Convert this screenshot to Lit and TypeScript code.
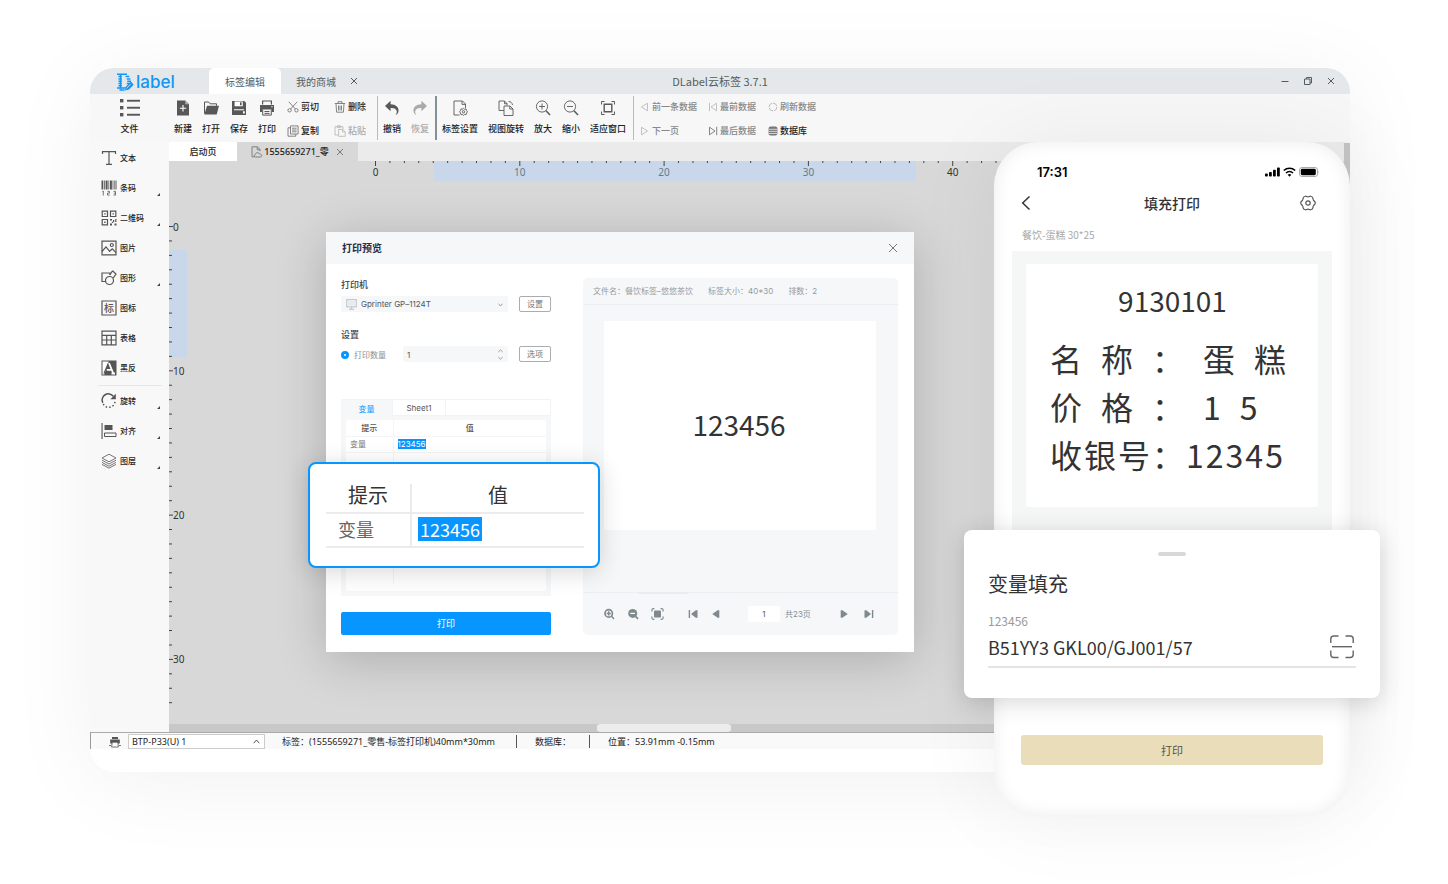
import { LitElement, html, svg, css, nothing } from "lit";
import type { SVGTemplateResult } from "lit";
import { customElement, property } from "lit/decorators.js";
import { classMap } from "lit/directives/class-map.js";

type Glyph = { w: number; h: number; body: SVGTemplateResult };

const g = (w: number, h: number, body: SVGTemplateResult): Glyph => ({ w, h, body });

/* Glyphs are drawn in currentColor; strokes are declared where needed. */
const GLYPHS: Record<string, Glyph> = {
  logo: g(17, 18, svg`
    <g fill="none" stroke="currentColor" stroke-width="1.5">
      <path d="M0 1.3h10M1.500 3.6h3.300M8.500 3.600h3.800M1.500 5.900h3.300M9.800 5.900h3.600M1.500 8.200h3.300M10.300 8.200h3.600M1.500 10.500h3.300M9.800 10.500h2.800M1.500 12.800h3.300M0 15.100h9M2.500 17h5"/>
      <path d="M3.600 1v14.500"/>
    </g>
    <path fill="currentColor" d="M13.800 8.200l2.800 3.600-4.600 4.800-4 .9.700-3.600z"/>
    <path stroke="#e4e8eb" stroke-width=".8" d="M9.500 15.500l4-4.300"/>`),
  menu: g(20, 18, svg`
    <g fill="currentColor"><rect width="3.400" height="3.400" y="0"/><rect width="3.400" height="3.400" y="7"/><rect width="3.400" height="3.400" y="14"/>
    <rect x="7" y=".8" width="13" height="1.900"/><rect x="7" y="7.800" width="13" height="1.900"/><rect x="7" y="14.800" width="13" height="1.900"/></g>`),
  create: g(16, 18, svg`
    <path fill="currentColor" d="M2 1.500h8.200L14 5.300V16.500H2z"/><path stroke="#fff" stroke-width="1.100" d="M8 6v6.400M4.800 9.200h6.400"/><path fill="#aaa" d="M10.200 1.500V5.300H14z"/>`),
  open: g(16, 18, svg`
    <path fill="none" stroke="currentColor" d="M1.500 14.500V3h4.200l1.400 1.800h6.400v2"/><path fill="currentColor" d="M4 6.800h12l-2.300 8.700H1.300z"/>`),
  save: g(16, 18, svg`
    <path fill="currentColor" d="M1 2h12.200L15 3.800V16H1z"/><path fill="#fff" d="M3.600 2.500h8.200v4.800H3.600zM3 10.300h10v1H3zM12 12.300h1.800v2.200H12z"/><path fill="currentColor" d="M9 3.200h1.600v3H9z"/>`),
  print: g(16, 18, svg`
    <path fill="none" stroke="currentColor" stroke-width="1.200" d="M3.600 5.500V2h8.800v3.500"/><path fill="currentColor" d="M1 6h14v7h-2.200v-2.500H3.200V13H1z"/><path fill="none" stroke="currentColor" d="M3.700 10.500v5.600h8.600v-5.600M5.500 12.500h5M5.500 14.400h5"/><path fill="#fff" d="M12.300 7.200h1.300v1h-1.300z"/>`),
  cut: g(12, 12, svg`
    <g fill="none" stroke="currentColor" stroke-width=".9"><circle cx="2.600" cy="9.300" r="1.700"/><circle cx="9.400" cy="9.300" r="1.700"/><path d="M3.600 8L10.200.8M8.400 8L1.800.8"/></g>`),
  copy: g(12, 12, svg`
    <g fill="none" stroke="currentColor" stroke-width=".9"><path d="M3.500.900h7.600v8.100H3.500zM3.500 2.800H1v8.400h7.800V9M5 3.200h4.600M5 5h4.600M5 6.800h4.600"/></g>`),
  remove: g(12, 12, svg`
    <g fill="none" stroke="currentColor" stroke-width=".9"><path d="M.8 2.500h10.400M4 2.300V.7h4v1.600M2 2.700l.6 8.500h6.800l.6-8.500M4.500 4.500v5M6 4.500v5M7.500 4.500v5"/></g>`),
  paste: g(12, 12, svg`
    <g fill="none" stroke="currentColor" stroke-width=".9"><path d="M4 10H1V1.700h8V4M3.300.800h3.400v1.800H3.300zM4.600 4.500h4.200l2.400 2.200v4.600H4.600zM8.500 4.700V7h2.500"/></g>`),
  undo: g(16, 18, svg`
    <path fill="currentColor" d="M6.600 1.800v3.400c5.200.1 8.200 3 7.900 6.700-.1 1.900-1.200 3.300-3 4.300 1-1.400 1.500-2.500 1.300-3.900-.3-2.200-2.500-3.400-6.200-3.300v3.200L1 7z"/>`),
  redo: g(16, 18, svg`
    <path fill="currentColor" d="M9.400 1.800v3.400C4.200 5.300 1.200 8.200 1.500 11.900c.1 1.900 1.200 3.300 3 4.300-1-1.400-1.500-2.500-1.300-3.900.3-2.200 2.500-3.400 6.200-3.300v3.200L15 7z"/>`),
  setup: g(16, 18, svg`
    <g fill="none" stroke="currentColor" stroke-width=".9"><path d="M7.500 16H2V2h8.500L13.500 5v4M10 2.200v3.200h3.300"/><circle cx="11.500" cy="12.800" r="1.200"/><path d="M11.500 9.300l1 .9 1.500-.3.500 1.500 1 1.400-1 1.200-.4 1.600-1.600-.1-1 .9-1-.9-1.600.1-.4-1.600-1-1.200 1-1.400.5-1.500 1.500.3z"/></g>`),
  rotateView: g(18, 18, svg`
    <g fill="none" stroke="currentColor" stroke-width=".9"><path d="M7 11.500H2V2h5.500L10 4.500v2M7.500 2.200v2.500H10M7 7h6l3 3v6.500H7zM12.800 7.200V10H16M11.500 2.500c2.200 0 3.700 1.300 4 3.500"/></g>`),
  zoomIn: g(16, 18, svg`
    <g fill="none" stroke="currentColor" stroke-width=".9"><circle cx="7" cy="7.500" r="5.600"/><path d="M4 7.500h6M7 4.500v6"/><path stroke-width="1.500" d="M11 11.700l4 4.300"/></g>`),
  zoomOut: g(16, 18, svg`
    <g fill="none" stroke="currentColor" stroke-width=".9"><circle cx="7" cy="7.500" r="5.600"/><path d="M4 7.500h6"/><path stroke-width="1.500" d="M11 11.700l4 4.300"/></g>`),
  fit: g(16, 18, svg`
    <g fill="none" stroke="currentColor"><path d="M1.500 5.500v-3h3M11.500 2.500h3v3M14.500 12.500v3h-3M4.500 15.500h-3v-3"/><path stroke-width="1.400" d="M4.200 5.300h7.600v7.400H4.200z"/></g>`),
  prev: g(10, 10, svg`<path fill="none" stroke="currentColor" stroke-width=".9" d="M7.500 1.200v7.600L1.500 5z"/>`),
  next: g(10, 10, svg`<path fill="none" stroke="currentColor" stroke-width=".9" d="M1.500 1.200v7.600L7.500 5z"/>`),
  first: g(10, 10, svg`<path fill="none" stroke="currentColor" stroke-width=".9" d="M8.500 1.200v7.600L3 5zM1.500.8v8.400"/>`),
  last: g(10, 10, svg`<path fill="none" stroke="currentColor" stroke-width=".9" d="M1.500 1.200v7.600L7 5zM8.700.8v8.400"/>`),
  refresh: g(10, 10, svg`<circle cx="5" cy="5" r="3.900" fill="none" stroke="currentColor" stroke-dasharray="5 1"/>`),
  database: g(10, 10, svg`<rect x=".6" y=".6" width="8.800" height="8.800" rx="2" fill="currentColor"/><path stroke="#eee" stroke-width=".8" d="M1 3.300h8M1 5.400h8M1 7.500h8"/>`),
  text: g(16, 16, svg`<path fill="none" stroke="currentColor" stroke-width="1.200" d="M1.500 4V1.600h13V4M8 1.600v12.800M5 14.400h6"/>`),
  barcode: g(16, 16, svg`
    <path fill="currentColor" d="M.5.500h1.800v9H.5zM3 .5h.8v9H3zM4.600.500h2v9h-2zM7.400.500h.8v9h-.8zM9 .5h1.900v9H9zM11.600.500h.8v9h-.8zM13.200.500h.6v9h-.6zM14.500.500h1v9h-1z"/>
    <path fill="none" stroke="currentColor" stroke-width=".8" d="M2.300 11v4.500M1.400 11.700l.9-.7M6.500 11.400h2v1.700h-2v2h2.200M12.500 11.400h2v3.700h-2M12.800 13.200h1.700"/>`),
  qrcode: g(16, 16, svg`
    <g fill="none" stroke="currentColor" stroke-width="1.200"><path d="M1.200 1.200h5.300v5.300H1.200zM9.500 1.200h5.300v5.300H9.500zM1.200 9.500h5.300v5.300H1.200z"/></g>
    <path fill="currentColor" d="M3.200 3.200h1.400v1.400H3.200zM11.500 3.200h1.400v1.400h-1.400zM3.200 11.500h1.400v1.400H3.200zM9 9h2v1.500H9zM12 10h1.200v2H12zM14.200 9h1.200v3h-1.200zM9 13.500h2v2H9zM10.800 11.700h1.400v1.400h-1.400zM13.500 13.500h2v2h-2z"/>`),
  picture: g(16, 16, svg`
    <g fill="none" stroke="currentColor" stroke-width="1.200"><path d="M1 1.200h14v13.600H1z"/><circle cx="10.800" cy="5" r="1.500"/><path d="M1 11.500l4-4.600 3.600 4.400 2.700-2.500 3.700 3.800"/></g>`),
  shape: g(16, 16, svg`
    <g fill="none" stroke="currentColor" stroke-width="1.200"><path d="M5 11.500H1V3h8v2"/><circle cx="8.500" cy="10.500" r="4"/><path d="M11.500.800l3.500 3.200-2.800 4M11.500.800L8.700 5"/></g>`),
  frame: g(16, 16, svg`<path fill="none" stroke="currentColor" stroke-width="1.200" d="M1 1h14v14H1z"/>`),
  table: g(16, 16, svg`
    <g fill="none" stroke="currentColor" stroke-width="1.200"><path d="M1 1.200h14v13.600H1zM1 5.300h14M1 10h14M5.700 5.300v9.500M10.300 5.300v9.500"/></g>`),
  invert: g(16, 16, svg`
    <path fill="currentColor" d="M.5.500h15v15H.5z"/><path fill="#fff" d="M1.500 1.500h6.200L3.300 14.500H1.500z"/>
    <path fill="none" stroke="currentColor" stroke-width="1.300" d="M3 13.500L7.500 3"/><path fill="none" stroke="#fff" stroke-width="1.800" d="M8 3l4.300 10.500M5.800 9.800h5M10.500 13.500h3.500"/>`),
  rotate: g(16, 16, svg`
    <path fill="none" stroke="currentColor" stroke-width="1.500" d="M1.800 9.800A6.200 6.200 0 0 1 12.300 3.300"/><path fill="none" stroke="currentColor" stroke-width="1.500" stroke-dasharray="1.500 2" d="M2.300 11A6.200 6.200 0 0 0 14 8.500"/><path fill="currentColor" d="M14.800.800v5.400H9.400z"/>`),
  align: g(16, 16, svg`<path fill="currentColor" d="M.5 0h1.100v16H.5zM3.500 2h8v5h-8z"/><path fill="none" stroke="currentColor" d="M3.500 10h11.500v3.500H3.500z"/>`),
  layers: g(16, 16, svg`
    <g fill="none" stroke="currentColor" stroke-width=".8"><path d="M8 1.200l7 3.800-7 3.800L1 5z"/><path d="M1 7.200l7 3.800 7-3.800M1 9.400l7 3.800 7-3.800M1 11.400l7 3.800 7-3.800"/></g>`),
  corner: g(3, 3, svg`<path fill="currentColor" d="M3 0v3H0z"/>`),
  close: g(8, 8, svg`<path fill="none" stroke="currentColor" d="M1 1l6 6M7 1L1 7"/>`),
  closeThin: g(10, 10, svg`<path fill="none" stroke="currentColor" stroke-width=".9" d="M1 1l8 8M9 1L1 9"/>`),
  minimise: g(8, 8, svg`<path stroke="currentColor" d="M.5 4.500h7"/>`),
  restore: g(8, 8, svg`<path fill="none" stroke="currentColor" d="M.5 2h5.500v5.500H.5zM2.500 2V.5h5V6H6"/>`),
  sheetDoc: g(12, 12, svg`<g fill="none" stroke="currentColor" stroke-width=".9"><path d="M3.500 10.800H1V.8h5.500L9 3.500v1.700M6.200 1v2.800H9M4.400 11c-1.500 0-1.700-2-.2-2.300.2-2.300 3.600-2.800 4.300-.7 1.500 0 2.200.700 2.200 1.600 0 .9-.7 1.400-1.500 1.400z"/></g>`),
  printer: g(12, 12, svg`<path fill="currentColor" d="M3 1h6v2H3zM1.200 3.500h9.600v4H1.200z"/><path fill="#fafafa" stroke="currentColor" stroke-width=".8" d="M3.200 6.200h5.600l.6 4.800H2.600z"/><path stroke="currentColor" stroke-width=".8" d="M0 9.500h2M10 9.500h2"/>`),
  caretUp: g(7, 5, svg`<path fill="none" stroke="currentColor" d="M.7 4.200L3.500 1l2.800 3.200"/>`),
  caretDown: g(5, 4, svg`<path fill="none" stroke="currentColor" stroke-width=".8" d="M.5.700L2.500 3 4.500.700"/>`),
  spin: g(5, 11, svg`<path fill="none" stroke="currentColor" stroke-width=".8" d="M.3 3L2.500.900 4.700 3M.3 8l2.200 2.100L4.700 8"/>`),
  monitor: g(11, 11, svg`<path fill="none" stroke="currentColor" stroke-width="1.200" d="M.7.700h9.600v7.100H.7zM5.500 8v2M3 10.400h5"/><path fill="currentColor" opacity=".25" d="M2 2h7v4.500H2z"/>`),
  magPlus: g(13, 12, svg`<circle cx="5.700" cy="5.400" r="3.700" fill="none" stroke="currentColor" stroke-width="1.700"/><path stroke="currentColor" stroke-width="1.500" d="M8.600 8.300l2.400 2.600M5.700 3.300v4.200M3.600 5.400h4.200"/>`),
  magMinus: g(13, 12, svg`<circle cx="5.700" cy="5.400" r="4.500" fill="currentColor"/><path stroke="currentColor" stroke-width="1.700" d="M8.600 8.300l2.400 2.600"/><path stroke="#fff" stroke-width="1.200" d="M3.300 5.400h4.800"/>`),
  fitSolid: g(13, 12, svg`<rect x="3" y="2.500" width="7" height="7" rx="1" fill="currentColor"/><path fill="none" stroke="currentColor" stroke-width="1.200" d="M.9 3.500V2.200Q.9.700 2.400.700h1M9.600.700h1q1.500 0 1.500 1.500v1.300M12.100 8.500v1.300q0 1.500-1.500 1.500h-1M3.400 11.300h-1Q.9 11.300.9 9.800V8.500"/>`),
  firstSolid: g(12, 10, svg`<path fill="currentColor" d="M10.500 1.200v7.600H8.800L4 5l4.800-3.800zM1.700 1h1.400v8H1.700z"/>`),
  prevSolid: g(12, 10, svg`<path fill="currentColor" d="M9.300 1.200v7.600H7.600L2.300 5l5.300-3.800z"/>`),
  nextSolid: g(12, 10, svg`<path fill="currentColor" d="M2.700 1.200v7.600h1.700L9.700 5 4.400 1.200z"/>`),
  lastSolid: g(12, 10, svg`<path fill="currentColor" d="M1.500 1.200v7.600h1.700L8 5 3.200 1.200zM8.900 1h1.400v8H8.900z"/>`),
  signal: g(15, 10, svg`<g fill="currentColor"><rect y="6.500" width="2.800" height="3" rx=".8"/><rect x="4" y="5" width="2.800" height="4.500" rx=".8"/><rect x="8" y="2.800" width="2.800" height="6.700" rx=".8"/><rect x="12" y=".5" width="2.800" height="9" rx=".8"/></g>`),
  wifi: g(13, 10, svg`<g fill="none" stroke="currentColor" stroke-width="1.600"><path d="M.8 3.500a8.400 8.400 0 0 1 11.400 0M3 6a5.200 5.200 0 0 1 7 0"/></g><path fill="currentColor" d="M4.700 7.700a2.800 2.800 0 0 1 3.600 0L6.500 9.700z"/>`),
  battery: g(21, 10, svg`<rect x=".5" y=".5" width="18" height="9" rx="2.500" fill="none" stroke="#aaa"/><rect x="1.800" y="1.800" width="15" height="6.400" rx="1.400" fill="currentColor"/><path fill="#aaa" d="M19.300 3.500q1.300 1.500 0 3z"/>`),
  back: g(10, 16, svg`<path fill="none" stroke="currentColor" stroke-width="1.500" d="M8.500 1.500L1.700 8l6.800 6.500"/>`),
  gear: g(16, 16, svg`<g fill="none" stroke="currentColor" stroke-width="1.200" stroke-linejoin="round"><circle cx="8" cy="8" r="2.200"/><path d="M5.300 1.200c.9-.3 1.500.7 2.700.7s1.800-1 2.700-.7c1 .3 2 .9 2.100 1.800.1 1 .200 1.700.8 2.500.7.800 1.600 1 1.700 2.500-.1 1.500-1 1.700-1.700 2.500-.6.8-.7 1.500-.8 2.500-.1.900-1.100 1.500-2.100 1.800-.9.300-1.500-.7-2.700-.7s-1.800 1-2.700.7c-1-.3-2-.9-2.100-1.800-.1-1-.2-1.700-.8-2.500C1.700 9.700.8 9.500.7 8c.1-1.500 1-1.700 1.700-2.500.6-.8.7-1.500.8-2.500.1-.9 1.100-1.500 2.100-1.800z"/></g>`),
  scan: g(24, 24, svg`<g fill="none" stroke="currentColor" stroke-width="1.400"><path d="M.8 8V4Q.8 1 3.800 1h4.700M15.500 1h4.700q3 0 3 3v4M23.200 15.500v4q0 3-3 3h-4.700M8.500 22.500H3.800q-3 0-3-3v-4"/><path d="M2 11.700h20"/></g>`),
};

const icon = (name: string) => {
  const { w, h, body } = GLYPHS[name];
  return html`<svg width=${w} height=${h} viewBox="0 0 ${w} ${h}" aria-hidden="true">${body}</svg>`;
};

const shared = css`
  * { box-sizing: border-box; }
  svg { display: block; flex: none; }
  button {
    margin: 0; padding: 0; border: 0; background: none; color: inherit;
    font: inherit; white-space: nowrap; cursor: pointer;
  }
  input, select {
    margin: 0; padding: 0; border: 0; background: none; color: inherit;
    font: inherit; border-radius: 0; outline: none; appearance: none; min-width: 0;
  }
  input[type="number"] { -moz-appearance: textfield; }
  input::-webkit-inner-spin-button { appearance: none; margin: 0; }
`;

@customElement("title-bar")
export class TitleBar extends LitElement {
  static styles = [shared, css`
    :host { display: grid; grid-template-columns: 1fr auto 1fr; align-items: center; height: 26px; background: #e4e8eb; color: #555c61; font-size: 11px; }
    .left { display: flex; align-items: center; height: 26px; }
    .logo { display: flex; align-items: center; gap: 2px; width: 119px; padding: 2px 0 0 27px; color: #1296f5; }
    .name { font: 500 17px/24px Inter, sans-serif; }
    .tab { display: flex; align-items: center; justify-content: center; gap: 14px; height: 26px; font-size: 10px; }
    .on { width: 72px; background: #fff; border-radius: 5px 5px 0 0; }
    .other { padding-left: 15px; }
    .title { font-family: "Noto Sans CJK SC", sans-serif; line-height: 16px; }
    .controls { display: flex; justify-content: flex-end; gap: 15px; padding-right: 15px; }
  `];
  render() {
    return html`
      <div class="left">
        <div class="logo">${icon("logo")}<span class="name">label</span></div>
        <button class="tab on">标签编辑</button>
        <button class="tab other">我的商城 ${icon("close")}</button>
      </div>
      <div class="title">DLabel云标签 3.7.1</div>
      <div class="controls">
        <button aria-label="最小化">${icon("minimise")}</button>
        <button aria-label="还原">${icon("restore")}</button>
        <button aria-label="关闭">${icon("close")}</button>
      </div>`;
  }
}

@customElement("tool-bar")
export class ToolBar extends LitElement {
  static styles = [shared, css`
    :host { display: flex; height: 48px; background: #f7f7f7; color: #222; font-size: 9px; line-height: 12px; font-weight: 500; }
    .tool { display: flex; flex-direction: column; align-items: center; gap: 6px; width: 28px; height: 48px; padding-top: 5px; }
    .wide { width: 46px; }
    .file { width: 79px; }
    .tool svg { color: #585858; }
    .off, .tool.off svg { color: #aaa; }
    .small { display: flex; align-items: center; gap: 2px; height: 24px; padding-top: 1px; }
    .small svg { color: #777; }
    .small.off svg { color: #bbb; }
    .dim { color: #888; }
    .edit { display: grid; grid-template-columns: 47px 43px; padding-left: 6px; }
    .data { display: grid; grid-template-columns: 68px 60px auto; padding-left: 6px; }
    .rule { width: 1px; height: 44px; margin-top: 2px; background: #bbb; }
    .heavy { width: 2px; background: #849298; margin-left: 1px; }
    .gap { margin-left: 2px; }
  `];
  private tool(name: string, label: string, extra = "") {
    return html`<button class="tool ${extra}">${icon(name)}<span>${label}</span></button>`;
  }
  private small(name: string, label: string, extra = "") {
    return html`<button class="small ${extra}">${icon(name)}<span>${label}</span></button>`;
  }
  render() {
    return html`
      ${this.tool("menu", "文件", "file")}
      ${this.tool("create", "新建")}${this.tool("open", "打开")}${this.tool("save", "保存")}${this.tool("print", "打印")}
      <div class="edit">
        ${this.small("cut", "剪切")}${this.small("remove", "删除")}
        ${this.small("copy", "复制")}${this.small("paste", "粘贴", "off")}
      </div>
      <div class="rule"></div>
      ${this.tool("undo", "撤销")}${this.tool("redo", "恢复", "off")}
      <div class="rule heavy"></div>
      ${this.tool("setup", "标签设置", "wide")}${this.tool("rotateView", "视图旋转", "wide")}
      ${this.tool("zoomIn", "放大")}${this.tool("zoomOut", "缩小")}${this.tool("fit", "适应窗口", "wide")}
      <div class="rule gap"></div>
      <div class="data">
        ${this.small("prev", "前一条数据", "off dim")}${this.small("first", "最前数据", "off dim")}${this.small("refresh", "刷新数据", "off dim")}
        ${this.small("next", "下一页", "off dim")}${this.small("last", "最后数据", "dim")}${this.small("database", "数据库")}
      </div>`;
  }
}

@customElement("side-tools")
export class SideTools extends LitElement {
  static styles = [shared, css`
    :host { display: block; padding-top: 1px; background: #f8f8f8; color: #222; font-size: 8px; line-height: 12px; font-weight: 500; }
    .item { display: flex; align-items: center; gap: 3px; width: 100%; height: 30px; padding: 0 9px 0 11px; }
    .face { display: grid; place-items: center; color: #555; }
    .face > * { grid-area: 1 / 1; }
    .glyph { font-size: 10px; line-height: 16px; }
    .more { margin: 0 0 7px auto; align-self: flex-end; color: #444; }
    .split { height: 1px; margin: 2px 7px 0 8px; background: #e6e6e6; }
  `];
  private item(name: string, label: string, more = false) {
    return html`<button class="item">
      <span class="face">${icon(name)}${name === "frame" ? html`<span class="glyph">标</span>` : nothing}</span>
      <span>${label}</span>
      ${more ? html`<span class="more">${icon("corner")}</span>` : nothing}
    </button>`;
  }
  render() {
    return html`
      ${this.item("text", "文本")}${this.item("barcode", "条码", true)}${this.item("qrcode", "二维码", true)}
      ${this.item("picture", "图片")}${this.item("shape", "图形", true)}${this.item("frame", "图标")}
      ${this.item("table", "表格")}${this.item("invert", "黑反")}
      <div class="split"></div>
      ${this.item("rotate", "旋转", true)}${this.item("align", "对齐", true)}${this.item("layers", "图层", true)}`;
  }
}

/* Millimetre ruler: one tick per unit, a number on every tenth. */
@customElement("mm-ruler")
export class MmRuler extends LitElement {
  @property({ type: Boolean }) vertical = false;
  @property({ type: Number }) start = 0;
  @property({ type: Number }) count = 0;
  @property({ type: Number }) from = 0;
  @property({ type: Number }) to = 0;
  static styles = [shared, css`
    :host { display: block; overflow: hidden; }
    text { font-size: 10px; fill: #333; }
    .soft { fill: #66798b; }
    .band { fill: #c8d8ea; }
    .tick { stroke: #444; }
  `];
  render() {
    const step = 14.43;
    const marks = Array.from({ length: this.count }, (_, n) => ({ n, at: this.start + n * step }));
    const soft = (at: number) => classMap({ soft: at > this.from && at < this.to });
    if (this.vertical) {
      return html`<svg width="24" height="562">
        <rect class="band" x="0" y=${this.from} width="18" height=${this.to - this.from}></rect>
        ${marks.map(({ n, at }) => svg`<path class="tick" d="M0 ${at}h${n % 10 ? 3 : 4}"/>
          ${n % 10 ? nothing : svg`<text class=${soft(at)} x="4" y=${at + 4}>${n}</text>`}`)}
      </svg>`;
    }
    return html`<svg width="100%" height="20">
      <rect class="band" x=${this.from} y="0" width=${this.to - this.from} height="20"></rect>
      ${marks.map(({ n, at }) => svg`<path class="tick" d="M${at} 0v${n % 10 ? 2 : 5}"/>
        ${n % 10 ? nothing : svg`<text class=${soft(at)} text-anchor="middle" x=${at} y="15">${n}</text>`}`)}
    </svg>`;
  }
}

@customElement("print-dialog")
export class PrintDialog extends LitElement {
  static styles = [shared, css`
    :host { display: block; position: relative; width: 588px; background: #fff; color: #50565c; font: 8px/12px Inter, "Noto Sans CJK SC", sans-serif; box-shadow: 0 8px 48px rgba(0, 0, 0, .2); }
    .head { display: flex; align-items: center; justify-content: space-between; height: 32px; padding: 0 16px; background: #f5f7f9; color: #2a2d4a; font-size: 10px; font-weight: 700; }
    .x { color: #666; }
    .body { display: grid; grid-template-columns: 210px 1fr; gap: 32px; padding: 14px 16px 17px 15px; }
    .label { display: block; font-size: 9px; line-height: 14px; font-weight: 500; color: #3c4248; margin-bottom: 4px; }
    .row { display: flex; align-items: center; justify-content: space-between; height: 16px; }
    .row + .label { margin-top: 16px; }
    .box { display: flex; align-items: center; gap: 4px; height: 16px; padding: 1px 5px 0; background: #f5f7f9; border-radius: 2px; }
    .printer { width: 167px; }
    .printer select { flex: 1; height: 15px; line-height: 15px; }
    .printer svg { color: #c3c9cd; }
    .printer .caret svg, .spin svg { color: #888; }
    .amount { width: 105px; padding-left: 4px; }
    .amount input { flex: 1; height: 15px; }
    .choice { display: flex; align-items: center; gap: 5px; width: 51px; height: 16px; padding-top: 1px; color: #8b9196; white-space: nowrap; }
    .choice input { flex: none; width: 8px; height: 8px; border: 3px solid #0796ff; border-radius: 50%; background: #fff; }
    .ghost { width: 32px; height: 16px; border: 1px solid #a9adb0; border-radius: 2px; color: #777; line-height: 14px; }
    .sheet { margin: 37px 0 16px; height: 197px; padding-bottom: 5px; background: #f5f7f9; border-radius: 2px; display: flex; flex-direction: column; }
    .tabs { display: flex; height: 17px; border: 1px solid #f1f3f5; border-left: 0; background: #fff; }
    .tabs button { width: 53px; border-right: 1px solid #f1f3f5; }
    .tabs .on { width: 52px; height: 17px; background: #f5f7f9; color: #0796ff; }
    .grid { flex: 1; margin: 4px 5px 0; background: #fff; border-radius: 2px; }
    table { width: 100%; border-collapse: collapse; }
    th, td { padding: 0; height: 16px; border-bottom: 1px solid #f3f4f6; font-weight: 500; text-align: center; line-height: 12px; }
    td { color: #777; font-weight: 400; text-align: left; padding-left: 4px; }
    th:first-child, td:first-child { width: 47px; border-right: 1px solid #f3f4f6; }
    .rest td { height: 116px; border-bottom: 0; }
    mark { background: #0796ff; color: #fff; }
    .submit { display: block; width: 100%; height: 23px; border-radius: 2px; background: #0796ff; color: #fff; font-size: 9px; }
    .view { background: #f5f7f9; border-radius: 5px; }
    .info { display: flex; gap: 15px; height: 27px; align-items: center; padding-left: 10px; border-bottom: 1px solid #eceef1; color: #969b9f; }
    .stage { padding: 16px 22px 62px 21px; }
    .label-face { display: grid; place-items: center; height: 209px; padding: 0 2px 4px 0; background: #fff; color: #333; font: 28px/40px "Noto Sans CJK SC", sans-serif; }
    .foot { display: flex; align-items: center; height: 43px; padding-left: 20px; border-top: 1px solid #eceef1; color: #7f898e; position: relative; }
    .thumb { position: absolute; top: -1px; left: 55px; width: 50px; height: 2px; background: #e9ebee; }
    .zooms, .nav, .page { display: flex; align-items: center; gap: 11px; }
    .nav { margin-left: 23px; }
    .page { gap: 5px; margin-left: 26px; color: #888e93; }
    .page + .nav { margin-left: 27px; gap: 13px; }
    .page input { width: 32px; height: 16px; background: #fff; border-radius: 2px; text-align: center; color: #555; }
    .callout { position: absolute; left: -18px; top: 230px; width: 292px; height: 106px; padding: 20px 14px 0 16px; border: 2px solid #0796ff; border-radius: 8px; background: #fff; box-shadow: 0 4px 24px rgba(0, 0, 0, .16); font: 20px/24px "Noto Sans CJK SC", sans-serif; }
    .callout th, .callout td { border-color: #ebebed; border-bottom-width: 2px; }
    .callout th { height: 29px; padding-bottom: 6px; color: #333; font-weight: 400; line-height: 22px; }
    .callout td { height: 34px; padding: 0 0 2px 6px; color: #666; font-size: 18px; line-height: 24px; }
    .callout th:first-child, .callout td:first-child { width: 85px; border-right-width: 2px; }
    .callout td:first-child { padding-left: 12px; }
    .callout mark { display: block; width: fit-content; padding: 0 2px; line-height: 24px; }
  `];
  render() {
    return html`
      <div class="head"><span>打印预览</span><button class="x" aria-label="关闭">${icon("closeThin")}</button></div>
      <div class="body">
        <div>
          <label class="label" for="printer">打印机</label>
          <div class="row">
            <div class="box printer">${icon("monitor")}
              <select id="printer"><option>Gprinter GP–1124T</option></select>
              <span class="caret">${icon("caretDown")}</span></div>
            <button class="ghost">设置</button>
          </div>
          <div class="label">设置</div>
          <div class="row">
            <label class="choice"><input type="radio" name="mode" checked />打印数量</label>
            <div class="box amount"><input type="number" value="1" aria-label="打印数量" /><span class="spin">${icon("spin")}</span></div>
            <button class="ghost">选项</button>
          </div>
          <div class="sheet">
            <div class="tabs"><button class="on">变量</button><button>Sheet1</button></div>
            <div class="grid">
              <table>
                <thead><tr><th>提示</th><th>值</th></tr></thead>
                <tbody>
                  <tr><td>变量</td><td><mark>123456</mark></td></tr>
                  <tr><td></td><td></td></tr>
                  <tr class="rest"><td></td><td></td></tr>
                </tbody>
              </table>
            </div>
          </div>
          <button class="submit">打印</button>
        </div>
        <div class="view">
          <div class="info"><span>文件名：餐饮标签–悠悠茶饮</span><span>标签大小：40*30</span><span>排数：2</span></div>
          <div class="stage"><div class="label-face">123456</div></div>
          <div class="foot">
            <div class="thumb"></div>
            <div class="zooms">
              <button aria-label="放大">${icon("magPlus")}</button>
              <button aria-label="缩小">${icon("magMinus")}</button>
              <button aria-label="适应">${icon("fitSolid")}</button>
            </div>
            <div class="nav">
              <button aria-label="首页">${icon("firstSolid")}</button>
              <button aria-label="上一页">${icon("prevSolid")}</button>
            </div>
            <label class="page"><input type="text" value="1" aria-label="页码" />共23页</label>
            <div class="nav">
              <button aria-label="下一页">${icon("nextSolid")}</button>
              <button aria-label="末页">${icon("lastSolid")}</button>
            </div>
          </div>
        </div>
      </div>
      <div class="callout">
        <table>
          <thead><tr><th>提示</th><th>值</th></tr></thead>
          <tbody><tr><td>变量</td><td><mark>123456</mark></td></tr></tbody>
        </table>
      </div>`;
  }
}

@customElement("label-window")
export class LabelWindow extends LitElement {
  static styles = [shared, css`
    :host { display: block; padding-bottom: 23px; border-radius: 24px; overflow: hidden; background: #fff; box-shadow: 0 10px 90px rgba(0, 0, 0, .06); font-family: "Noto Sans", "Noto Sans CJK SC", sans-serif; }
    .main { display: grid; grid-template-columns: 79px 1fr 6px; }
    .docs { display: flex; height: 19px; background: #ebebeb; font-size: 9px; line-height: 12px; color: #222; font-weight: 500; }
    .doc { display: flex; align-items: center; justify-content: center; height: 19px; padding-top: 1px; }
    .home { width: 68px; background: #fff; }
    .current { gap: 1px; width: 121px; background: #d8d8d8; }
    .current svg { color: #777; }
    .name { margin-right: 6px; }
    .canvas { position: relative; padding: 71px 0 72px 157px; background: #d8d8d8; overflow: hidden; }
    .across { position: absolute; inset: 0 0 auto 0; }
    .down { position: absolute; left: 0; top: 0; }
    .hbar { height: 8px; background: #c8c8c8; }
    .hthumb { width: 134px; height: 8px; margin-left: 428px; border-radius: 3px; background: #ececec; }
    .vbar { background: #f2f2f2; }
    .vthumb { height: 90%; margin-top: 1px; background: #c4c4c4; }
    .status { display: flex; align-items: center; height: 17px; padding: 1px 0 0 18px; border-top: 1px solid #aaa; border-left: 1px solid #999; background: #f9f9f9; font-size: 9px; line-height: 14px; color: #222; }
    .status svg { color: #555; }
    .pick { display: flex; align-items: center; width: 137px; height: 15px; margin: 0 17px 0 7px; padding: 0 4px 0 3px; border: 1px solid #ccc; background: #fff; }
    .pick select { flex: 1; height: 13px; line-height: 13px; }
    .job { margin-right: 3px; }
    .bar { width: 1px; height: 13px; background: #555; margin: 0 18px; }
  `];
  render() {
    return html`
      <title-bar></title-bar>
      <tool-bar></tool-bar>
      <div class="main">
        <side-tools></side-tools>
        <div>
          <div class="docs">
            <button class="doc home">启动页</button>
            <button class="doc current">${icon("sheetDoc")}<span class="name">1555659271_零</span>${icon("close")}</button>
          </div>
          <div class="canvas">
            <mm-ruler class="across" start="206.5" count="54" from="265" to="747"></mm-ruler>
            <mm-ruler class="down" vertical start="65.5" count="34" from="89" to="196"></mm-ruler>
            <print-dialog></print-dialog>
          </div>
          <div class="hbar"><div class="hthumb"></div></div>
        </div>
        <div class="vbar"><div class="vthumb"></div></div>
      </div>
      <div class="status">
        ${icon("printer")}
        <div class="pick"><select aria-label="打印机"><option>BTP-P33(U) 1</option></select>${icon("caretUp")}</div>
        <span class="job">标签：(1555659271_零售-标签打印机)40mm*30mm</span><span class="bar"></span>
        <span>数据库：</span><span class="bar"></span>
        <span>位置：53.91mm -0.15mm</span>
      </div>`;
  }
}

@customElement("phone-preview")
export class PhonePreview extends LitElement {
  static styles = [shared, css`
    :host { display: block; width: 356px; padding: 20px 0 51px; border-radius: 44px; background: #fff; box-shadow: inset 0 0 18px rgba(0, 0, 0, .08), 0 0 90px rgba(0, 0, 0, .06); color: #333; font-family: "Noto Sans CJK SC", sans-serif; }
    .status { display: flex; align-items: center; justify-content: space-between; height: 18px; padding: 1px 30px 0 43px; color: #000; font: 600 13px/18px Inter, sans-serif; }
    .marks { display: flex; align-items: center; gap: 3px; }
    .nav { display: grid; grid-template-columns: 30px 1fr 30px; align-items: center; height: 22px; margin: 12px 27px 0; }
    .nav button { display: flex; }
    .cog { justify-content: center; color: #555; }
    .title { font-size: 14px; line-height: 22px; font-weight: 500; text-align: center; }
    .spec { margin: 14px 28px 9px; font-size: 10px; line-height: 14px; color: #aaa; }
    .paper { margin: 0 18px; padding: 13px 14px 60px 14px; background: #f5f7f7; }
    .card { padding: 16px 23px 29px 24px; border-radius: 3px; background: #fff; }
    .code { margin-bottom: 14px; font-size: 28px; line-height: 40px; text-align: center; }
    .line { display: flex; font-size: 32px; line-height: 48px; }
    .loose { gap: 19px; }
    .tight { gap: 2px; }
    .submit { display: block; width: 302px; height: 30px; margin: 168px auto 0; border-radius: 3px; background: #eaddba; color: #5a5242; font-size: 11px; }
    .sheet { position: absolute; left: -30px; right: -30px; top: 388px; padding: 22px 24px 30px; border-radius: 8px; background: #fff; box-shadow: 0 4px 24px rgba(0, 0, 0, .16); }
    .grip { width: 28px; height: 4px; margin: 0 auto 12px; border-radius: 2px; background: #d8d8d8; }
    .heading { margin: 0; font-size: 20px; line-height: 32px; font-weight: 400; }
    .hint { display: block; margin-top: 12px; font-size: 12px; line-height: 18px; color: #999; }
    .field { display: flex; align-items: center; height: 38px; border-bottom: 2px solid #e4e4e4; padding: 0 2px 2px 0; color: #333; }
    .field input { flex: 1; height: 28px; font-size: 18px; }
    .field button { color: #666; }
  `];
  private line(text: string, pace: string) {
    return html`<div class="line ${pace}">${[...text].map((c) => html`<span>${c}</span>`)}</div>`;
  }
  render() {
    return html`
      <div class="status"><span>17:31</span><span class="marks">${icon("signal")}${icon("wifi")}${icon("battery")}</span></div>
      <div class="nav">
        <button aria-label="返回">${icon("back")}</button>
        <span class="title">填充打印</span>
        <button class="cog" aria-label="设置">${icon("gear")}</button>
      </div>
      <div class="spec">餐饮-蛋糕 30*25</div>
      <div class="paper">
        <div class="card">
          <div class="code">9130101</div>
          ${this.line("名称：蛋糕", "loose")}${this.line("价格：15", "loose")}${this.line("收银号：12345", "tight")}
        </div>
      </div>
      <button class="submit">打印</button>
      <div class="sheet">
        <div class="grip"></div>
        <h2 class="heading">变量填充</h2>
        <label class="hint" for="value">123456</label>
        <div class="field"><input id="value" type="text" value="B51YY3 GKL00/GJ001/57" /><button aria-label="扫码">${icon("scan")}</button></div>
      </div>`;
  }
}

@customElement("app-root")
export class AppRoot extends LitElement {
  static styles = css`
    :host { display: block; position: relative; min-height: 100vh; box-sizing: border-box; padding: 68px 98px 112px 90px; background: #fff; overflow: hidden; }
    .phone { position: absolute; top: 142px; right: 98px; }
  `;
  render() {
    return html`<label-window></label-window><phone-preview class="phone"></phone-preview>`;
  }
}
